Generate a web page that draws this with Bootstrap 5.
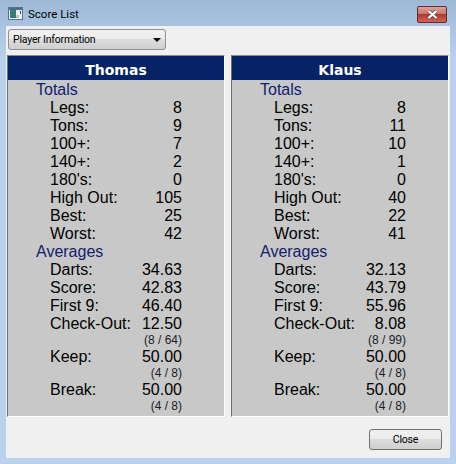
<!DOCTYPE html>
<html lang="en">
<head>
    <meta charset="UTF-8">
    <meta name="viewport" content="width=device-width, initial-scale=1.0">
    <title>Score List</title>
    <link href="https://cdn.jsdelivr.net/npm/bootstrap@5.3.0/dist/css/bootstrap.min.css" rel="stylesheet">
    <style>
        html, body { height: 100%; }
        body { background: #b9d1ec; font-family: "Liberation Sans", Arial, sans-serif; color: #000; }
        .win-frame { width: 456px; height: 464px; padding: 0 6px 6px; background: linear-gradient(180deg, #9db8d6 0, #a9c3e0 26px, #b9d1ec 60px, #b9d1ec 100%); }
        .win-title { height: 26px; padding-left: 2px; }
        .win-title-text { font-family: Roboto, sans-serif; font-size: 11.5px; margin-left: 5px; padding-top: 3px; color: #000; }
        .win-close { width: 30px; height: 17px; margin-right: 3px; margin-top: 6px; border: 1px solid #6b2a2a; border-radius: 2px; background: linear-gradient(180deg, #d9a39b 0, #c9776c 45%, #b5362a 50%, #c9675a 100%); }
        .win-body { height: 432px; background: #f0f0f0; }
        .tool-bar { height: 29px; padding: 3px 0 0 2px; }
        .player-drop { width: 158px; height: 21px; padding: 0 4px 0 4px; border: 1px solid #8e8f8f; border-radius: 3px; background: linear-gradient(180deg, #f2f2f2 0, #ebebeb 45%, #dddddd 50%, #cfcfcf 100%); font-family: Roboto, sans-serif; font-size: 10.5px; letter-spacing: -.2px; }
        .drop-label { padding-top: 1px; }
        .drop-caret { width: 0; height: 0; border-left: 4px solid transparent; border-right: 4px solid transparent; border-top: 4px solid #000; }
        .panels { gap: 6px; padding: 0 1px; height: 363px; }
        .score-panel { width: 218px; background: #c8c8c8; border-left: 1px solid #6f6f6f; border-top: 1px solid #8a8a8a; border-bottom: 1px solid #fff; border-right: 1px solid #fff; }
        .panel-head { height: 24px; line-height: 29px; background: #062366; color: #fff; font-family: "DejaVu Sans", sans-serif; font-weight: 700; font-size: 14px; text-align: center; }
        .stat-list { padding-top: 1px; font-size: 16px; }
        .stat-group { height: 18px; line-height: 18px; padding-left: 28px; color: #14206c; }
        .stat-row { height: 18px; line-height: 18px; padding-left: 42px; width: 174px; }
        .stat-sub { height: 15px; line-height: 15px; width: 174px; font-size: 12px; color: #1c1c2c; text-align: right; }
        .foot-bar { height: 41px; padding: 4px 8px 0 0; }
        .close-btn { width: 73px; height: 21px; padding: 0; border: 1px solid #707070; border-radius: 3px; background: linear-gradient(180deg, #f2f2f2 0, #ebebeb 45%, #dddddd 50%, #cfcfcf 100%); font-family: Roboto, sans-serif; font-size: 10.5px; letter-spacing: -.2px; color: #000; }
    </style>
</head>
<body>
    <div class="win-frame d-flex flex-column">
        <div class="win-title d-flex align-items-center">
            <svg width="15" height="13" viewBox="0 0 15 13">
                <rect x="0.5" y="0.5" width="14" height="12" fill="#eef3f8" stroke="#5d7288"/>
                <rect x="1" y="1" width="13" height="2" fill="#4e6b8c"/>
                <rect x="2" y="3" width="6" height="8" fill="#2f7f78"/>
                <rect x="8" y="8" width="3" height="3" fill="#b9c6d2"/>
                <rect x="12" y="4" width="1" height="3" fill="#30475f"/>
            </svg>
            <span class="win-title-text">Score List</span>
            <div class="win-close ms-auto align-self-start d-flex align-items-center justify-content-center">
                <svg width="13" height="9" viewBox="0 0 13 9">
                    <path d="M2.5 1 L10.5 8 M10.5 1 L2.5 8" stroke="#5a4a50" stroke-width="3.6"/>
                    <path d="M2.5 1 L10.5 8 M10.5 1 L2.5 8" stroke="#fff" stroke-width="2.2"/>
                </svg>
            </div>
        </div>
        <div class="win-body d-flex flex-column">
            <div class="tool-bar">
                <div class="player-drop d-flex align-items-center justify-content-between">
                    <span class="drop-label">Player Information</span>
                    <span class="drop-caret"></span>
                </div>
            </div>
            <div class="panels d-flex" id="panels"></div>
            <div class="foot-bar d-flex align-items-center justify-content-end">
                <button type="button" class="close-btn">Close</button>
            </div>
        </div>
    </div>

    <script src="https://cdn.jsdelivr.net/npm/bootstrap@5.3.0/dist/js/bootstrap.bundle.min.js"></script>
    <script>
        const players = [
            { name: "Thomas", totals: ["8", "9", "7", "2", "0", "105", "25", "42"], darts: "34.63", score: "42.83", first9: "46.40", checkout: "12.50", checkoutSub: "(8 / 64)" },
            { name: "Klaus", totals: ["8", "11", "10", "1", "0", "40", "22", "41"], darts: "32.13", score: "43.79", first9: "55.96", checkout: "8.08", checkoutSub: "(8 / 99)" }
        ];
        const totalLabels = ["Legs:", "Tons:", "100+:", "140+:", "180's:", "High Out:", "Best:", "Worst:"];

        function statRow(label, value) {
            return `<div class="stat-row d-flex justify-content-between"><span>${label}</span><span>${value}</span></div>`;
        }

        document.getElementById("panels").innerHTML = players.map((p) => `
            <div class="score-panel">
                <div class="panel-head">${p.name}</div>
                <div class="stat-list">
                    <div class="stat-group">Totals</div>
                    ${totalLabels.map((l, i) => statRow(l, p.totals[i])).join("")}
                    <div class="stat-group">Averages</div>
                    ${statRow("Darts:", p.darts)}
                    ${statRow("Score:", p.score)}
                    ${statRow("First 9:", p.first9)}
                    ${statRow("Check-Out:", p.checkout)}
                    <div class="stat-sub">${p.checkoutSub}</div>
                    ${statRow("Keep:", "50.00")}
                    <div class="stat-sub">(4 / 8)</div>
                    ${statRow("Break:", "50.00")}
                    <div class="stat-sub">(4 / 8)</div>
                </div>
            </div>`).join("");
    </script>
</body>
</html>
